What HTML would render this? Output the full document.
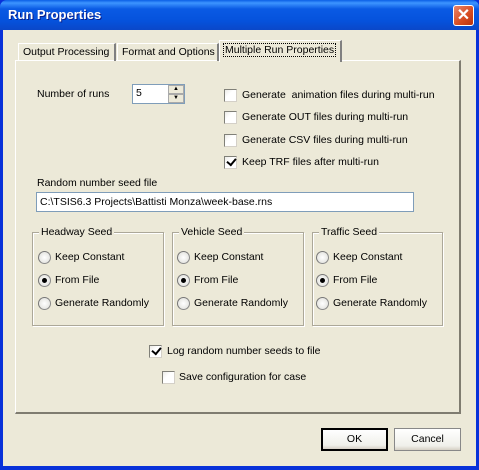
<!DOCTYPE html>
<html><head><style>
*{margin:0;padding:0;box-sizing:border-box}
body{width:479px;height:470px;overflow:hidden;background:#0831d9;font-family:"Liberation Sans",sans-serif;font-size:10.5px;color:#000;position:relative}
.a{position:absolute;white-space:nowrap}
#title{left:0;top:0;width:479px;height:30px;background:linear-gradient(#0a5fe6 0%,#3d95ff 10%,#0a5ae4 30%,#0552dc 70%,#0a47c8 100%);border-radius:7px 7px 0 0}
#client{left:3px;top:30px;width:473px;height:436px;background:#ece9d8}
.cb{position:absolute;width:13px;height:13px;border:1px solid #808078;border-right-color:#d4d0c8;border-bottom-color:#d4d0c8;background:linear-gradient(135deg,#ecebe6,#fff 40%)}
.cb.ck::after{content:"";position:absolute;left:2px;top:1px;width:7px;height:4px;border-left:2px solid #000;border-bottom:2px solid #000;transform:rotate(-50deg)}
.rb{position:absolute;width:13px;height:13px;border-radius:50%;border:1px solid #8a8a8a;background:radial-gradient(#fff,#dcdcd7);border-top-color:#777;border-left-color:#777}
.rb.on::after{content:"";position:absolute;left:3px;top:3px;width:5px;height:5px;border-radius:50%;background:#000}
.grp{position:absolute;border:1px solid #aca899;box-shadow:inset 1px 1px #fff,1px 1px #fff}
.grp span{position:absolute;top:-7px;left:6px;background:#ece9d8;padding:0 2px}
.btn{position:absolute;height:23px;width:67px;background:linear-gradient(#fff,#f0f0ea 80%,#d6d0c5);text-align:center;line-height:19px}
</style></head><body>
<div id="title" class="a"></div>
<div class="a" style="left:8px;top:7px;color:#fff;font-weight:bold;font-size:13px;text-shadow:1px 1px #0a1e8a">Run Properties</div>
<div class="a" style="left:453px;top:5px;width:21px;height:21px;border:1px solid #fff;border-radius:3px;background:linear-gradient(135deg,#e8856a,#d64a1f 60%,#b8320f);color:#fff;font-weight:bold;font-size:16px;text-align:center;line-height:19px">✕</div>
<div id="client" class="a"></div>
<div class="a" style="left:15px;top:60px;width:446px;height:354px;border:1px solid #fff;background:#ece9d8;border-right:2px solid #7f7c70;border-bottom:2px solid #7f7c70"></div>
<div class="a" style="left:18px;top:43px;width:98px;height:18px;border:1px solid #fff;border-right:2px solid #808080;border-bottom:none;padding:2px 0 0 4px;line-height:13px">Output Processing</div>
<div class="a" style="left:117px;top:43px;width:102px;height:18px;border:1px solid #fff;border-right:2px solid #808080;border-bottom:none;padding:2px 0 0 4px;line-height:13px">Format and Options</div>
<div class="a" style="left:219px;top:40px;width:123px;height:22px;border:1px solid #fff;border-right:2px solid #808080;border-bottom:none;background:#ece9d8;padding:3px 0 0 4px;line-height:13px"><span style="outline:1px dotted #000;padding:0 1px">Multiple Run Properties</span></div>
<div class="a" style="left:37px;top:88px">Number of runs</div>
<div class="a" style="left:132px;top:84px;width:53px;height:20px;border:1px solid #7f9db9;background:#fff;padding:2px 0 0 3px">5</div>
<div class="a" style="left:168px;top:85px;width:16px;height:9px;border:1px solid #aaa;background:#ece9d8;font-size:6px;text-align:center;line-height:7px">▲</div>
<div class="a" style="left:168px;top:94px;width:16px;height:9px;border:1px solid #aaa;background:#ece9d8;font-size:6px;text-align:center;line-height:7px">▼</div>
<div class="cb" style="left:224px;top:89px"></div><div class="a" style="left:242px;top:89px">Generate &nbsp;animation files during multi-run</div>
<div class="cb" style="left:224px;top:111px"></div><div class="a" style="left:242px;top:111px">Generate OUT files during multi-run</div>
<div class="cb" style="left:224px;top:134px"></div><div class="a" style="left:242px;top:134px">Generate CSV files during multi-run</div>
<div class="cb ck" style="left:224px;top:156px"></div><div class="a" style="left:242px;top:156px">Keep TRF files after multi-run</div>
<div class="a" style="left:37px;top:177px">Random number seed file</div>
<div class="a" style="left:36px;top:192px;width:378px;height:20px;border:1px solid #7f9db9;background:#fff;padding:3px 0 0 3px">C:\TSIS6.3 Projects\Battisti Monza\week-base.rns</div>
<div class="grp" style="left:32px;top:232px;width:132px;height:94px"><span>Headway Seed</span></div>
<div class="grp" style="left:172px;top:232px;width:132px;height:94px"><span>Vehicle Seed</span></div>
<div class="grp" style="left:312px;top:232px;width:131px;height:94px"><span>Traffic Seed</span></div>
<div class="rb" style="left:38px;top:251px"></div><div class="a" style="left:55px;top:251px">Keep Constant</div>
<div class="rb on" style="left:38px;top:274px"></div><div class="a" style="left:55px;top:274px">From File</div>
<div class="rb" style="left:38px;top:297px"></div><div class="a" style="left:55px;top:297px">Generate Randomly</div>
<div class="rb" style="left:177px;top:251px"></div><div class="a" style="left:194px;top:251px">Keep Constant</div>
<div class="rb on" style="left:177px;top:274px"></div><div class="a" style="left:194px;top:274px">From File</div>
<div class="rb" style="left:177px;top:297px"></div><div class="a" style="left:194px;top:297px">Generate Randomly</div>
<div class="rb" style="left:316px;top:251px"></div><div class="a" style="left:333px;top:251px">Keep Constant</div>
<div class="rb on" style="left:316px;top:274px"></div><div class="a" style="left:333px;top:274px">From File</div>
<div class="rb" style="left:316px;top:297px"></div><div class="a" style="left:333px;top:297px">Generate Randomly</div>
<div class="cb ck" style="left:149px;top:345px"></div><div class="a" style="left:167px;top:345px">Log random number seeds to file</div>
<div class="cb" style="left:162px;top:371px"></div><div class="a" style="left:179px;top:371px">Save configuration for case</div>
<div class="btn" style="left:321px;top:428px;border:2px solid #000">OK</div>
<div class="btn" style="left:394px;top:428px;border:1px solid #888;line-height:21px">Cancel</div>
</body></html>
